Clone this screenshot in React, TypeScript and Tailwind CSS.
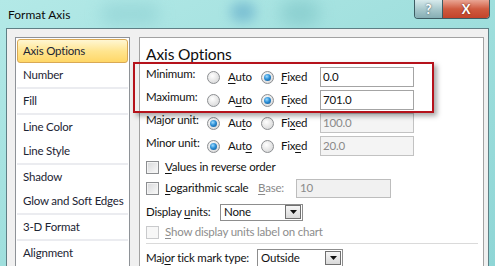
import React from "react";

const font = { fontFamily: 'Lato, "Noto Sans", sans-serif' };

function Radio({ on }: { on?: boolean }) {
  return (
    <div className="w-[13px] h-[13px] shrink-0 rounded-full border border-[#8c8e91] bg-[radial-gradient(circle_at_40%_35%,#ffffff_0%,#eaeaea_45%,#cfd0d2_100%)] flex items-center justify-center">
      {on && (
        <div className="w-[7px] h-[7px] rounded-full bg-[radial-gradient(circle_at_40%_35%,#9fdcff_0%,#2c8fd6_45%,#0c4f8c_100%)]" />
      )}
    </div>
  );
}

function Check({ disabled }: { disabled?: boolean }) {
  return (
    <div
      className={
        "w-[13px] h-[13px] shrink-0 border " +
        (disabled
          ? "border-[#c9cacc] bg-[#f7f7f7]"
          : "border-[#8c8e91] bg-gradient-to-br from-[#d7d8da] to-[#fafafa] shadow-[inset_0_0_0_1px_#f4f4f4]")
      }
    />
  );
}

// underline one letter as the access key
function Key({ text, at }: { text: string; at: number }) {
  return (
    <span className="whitespace-nowrap">
      {text.slice(0, at)}
      <span className="underline underline-offset-2">{text[at]}</span>
      {text.slice(at + 1)}
    </span>
  );
}

function Select({ value, w }: { value: string; w: string }) {
  return (
    <div className={"h-[17px] border border-[#8d8d8d] bg-white flex items-center justify-between pl-[3px] pr-px " + w}>
      <span className="leading-none text-[#111]">{value}</span>
      <div className="w-[16px] h-[14px] border border-[#707070] bg-gradient-to-b from-[#f6f6f6] to-[#d9d9d9] flex items-center justify-center">
        <svg width="7" height="4" viewBox="0 0 7 4">
          <path d="M0 0H7L3.5 4Z" fill="#111" />
        </svg>
      </div>
    </div>
  );
}

type RowProps = {
  label: string;
  auto: [string, number];
  fixed: [string, number];
  fixedOn: boolean;
  value: string;
};

function UnitRow({ label, auto, fixed, fixedOn, value }: RowProps) {
  return (
    <div className="flex items-center h-[20px]">
      <span className="w-[61px] shrink-0 whitespace-nowrap self-start leading-[14px] text-[#111]">{label}</span>
      <div className="w-[54px] shrink-0 flex items-center gap-[8px]">
        <Radio on={!fixedOn} />
        <Key text={auto[0]} at={auto[1]} />
      </div>
      <div className="w-[59px] shrink-0 flex items-center gap-[7px]">
        <Radio on={fixedOn} />
        <Key text={fixed[0]} at={fixed[1]} />
      </div>
      <div
        className={
          "w-[94px] h-[20px] border flex items-center pl-[2px] " +
          (fixedOn ? "border-[#a4a4a4] bg-white text-[#111]" : "border-[#c2c2c2] bg-[#f4f4f4] text-[#8a8a8a]")
        }
      >
        {value}
      </div>
    </div>
  );
}

const groups = [
  ["Axis Options", "Number"],
  ["Fill"],
  ["Line Color", "Line Style"],
  ["Shadow", "Glow and Soft Edges"],
  ["3-D Format"],
  ["Alignment"],
];

export default function App() {
  return (
    <div
      className="relative w-[495px] h-[266px] overflow-hidden text-[11.5px] tracking-[-0.2px] bg-gradient-to-br from-[#b3e9e7] via-[#9fdfdd] to-[#8fd6d6]"
      style={font}
    >
      {/* blurry glass behind the title bar */}
      <div className="absolute left-[230px] top-[2px] w-[26px] h-[20px] rounded-full bg-[#5fa9c9] opacity-60 blur-[6px]" />
      <div className="absolute left-[280px] top-[0px] w-[40px] h-[26px] rounded-full bg-[#7cc4c6] opacity-60 blur-[8px]" />
      <div className="absolute left-[100px] top-[4px] w-[60px] h-[20px] rounded-full bg-[#8ccfd2] opacity-60 blur-[8px]" />

      {/* title bar */}
      <div className="relative h-[28px] flex items-start justify-between">
        <span className="pl-[8px] pt-[6px] leading-[18px] text-[12px] tracking-normal text-[#0b0b0b]">Format Axis</span>
        <div className="mr-[5px] flex h-[19px] border border-t-0 border-[#3d5c63] rounded-b-[4px] overflow-hidden">
          <div className="w-[28px] bg-gradient-to-b from-[#d7eaec] via-[#a9c9cd] to-[#86aeb4] border-r border-[#3d5c63] flex items-center justify-center">
            <span className="text-white font-bold text-[13px] leading-none [text-shadow:0_0_2px_#30474c]">?</span>
          </div>
          <div className="w-[46px] bg-gradient-to-b from-[#e9a594] via-[#cf5a3f] to-[#c3432a] flex items-center justify-center">
            <span className="text-white font-bold text-[13px] leading-none [text-shadow:0_0_2px_#5a1a10]">X</span>
          </div>
        </div>
      </div>

      {/* client area */}
      <div className="relative ml-[6px] w-[483px] h-[238px] border-l border-t border-r border-[#5f7f85] bg-[#f0f0f0] flex gap-[9px] pl-[8px] pt-[8px]">
        {/* category list */}
        <div className="w-[115px] shrink-0 h-[240px] border border-[#8e9297] bg-white p-px flex flex-col text-[#1c2433]">
          {groups.map((g, gi) => (
            <React.Fragment key={gi}>
              {gi > 0 && <div className="h-[2px] bg-[#ebecf0]" />}
              {g.map((item) => (
                <div
                  key={item}
                  className={
                    "h-[24px] flex items-center pl-[5px] whitespace-nowrap rounded-[3px] border " +
                    (item === "Axis Options"
                      ? "border-[#d9a955] bg-gradient-to-b from-[#fff6d2] via-[#ffe58f] to-[#ffd766]"
                      : "border-transparent")
                  }
                >
                  {item}
                </div>
              ))}
            </React.Fragment>
          ))}
        </div>

        {/* options panel */}
        <div className="w-[345px] shrink-0 h-[240px] border border-[#a2a2a2] bg-white pl-[6px] flex flex-col text-[#111]">
          <div className="mt-[6px] text-[15.5px] leading-[20px] tracking-[-0.1px] text-[#0e0e0e]">Axis Options</div>

          <div className="mt-[3px] flex flex-col gap-[3px]">
            <UnitRow label="Minimum:" auto={["Auto", 0]} fixed={["Fixed", 0]} fixedOn value="0.0" />
            <UnitRow label="Maximum:" auto={["Auto", 1]} fixed={["Fixed", 1]} fixedOn value="701.0" />
            <UnitRow label="Major unit:" auto={["Auto", 2]} fixed={["Fixed", 2]} fixedOn={false} value="100.0" />
            <UnitRow label="Minor unit:" auto={["Auto", 3]} fixed={["Fixed", 3]} fixedOn={false} value="20.0" />
          </div>

          <div className="mt-px h-[20px] flex items-center gap-[6px]">
            <Check />
            <Key text="Values in reverse order" at={0} />
          </div>

          <div className="mt-px h-[20px] flex items-center">
            <Check />
            <span className="ml-[6px] w-[93px] shrink-0">
              <Key text="Logarithmic scale" at={0} />
            </span>
            <span className="w-[38px] shrink-0 text-[#8a8a8a]">
              <Key text="Base:" at={0} />
            </span>
            <div className="w-[95px] h-[19px] border border-[#bdbdbd] bg-[#f1f1f1] text-[#8a8a8a] flex items-center pl-[3px]">
              10
            </div>
          </div>

          <div className="mt-[4px] h-[20px] flex items-center">
            <span className="w-[74px] shrink-0">
              <Key text="Display units:" at={8} />
            </span>
            <Select value="None" w="w-[83px]" />
          </div>

          <div className="h-[20px] flex items-center gap-[6px] text-[#8d8d8d]">
            <Check disabled />
            <Key text="Show display units label on chart" at={0} />
          </div>

          <div className="mt-px mr-[5px] h-px bg-[#dadada]" />

          <div className="mt-[5px] h-[18px] flex items-center">
            <span className="w-[111px] shrink-0">
              <Key text="Major tick mark type:" at={3} />
            </span>
            <Select value="Outside" w="w-[86px] h-[18px]" />
          </div>
        </div>
      </div>

      {/* red highlight around min / max */}
      <div className="absolute left-[133px] top-[62px] w-[301px] h-[51px] border-2 border-[#b5121b] shadow-[3px_3px_5px_rgba(0,0,0,0.35)]" />
    </div>
  );
}
